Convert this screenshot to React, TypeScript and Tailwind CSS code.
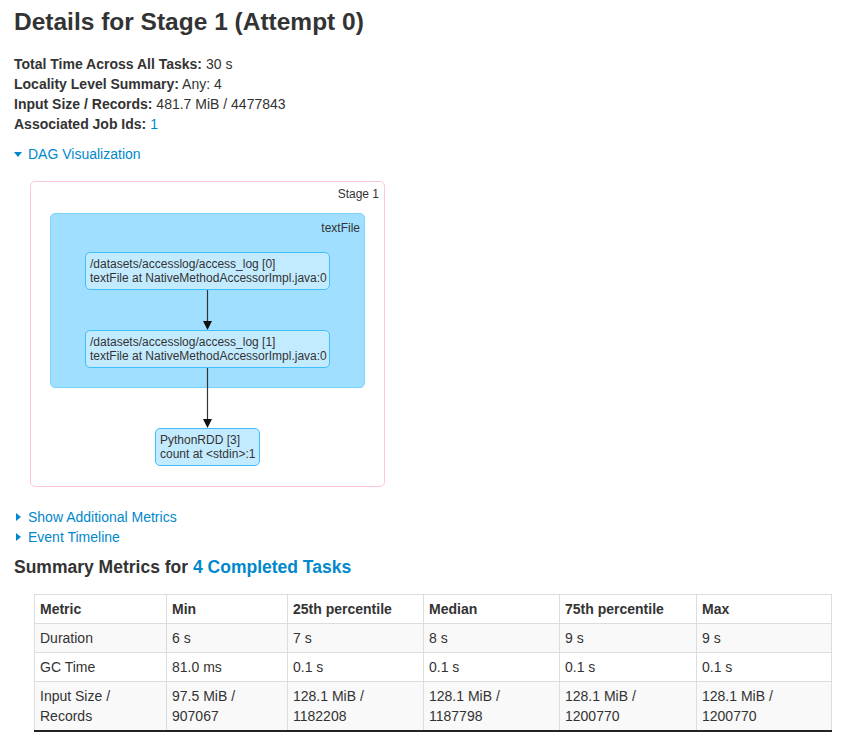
import React from "react";

const rows: { name: string; vals: string[][] }[] = [
  { name: "Duration", vals: [["6 s"], ["7 s"], ["8 s"], ["9 s"], ["9 s"]] },
  { name: "GC Time", vals: [["81.0 ms"], ["0.1 s"], ["0.1 s"], ["0.1 s"], ["0.1 s"]] },
  {
    name: "Input Size / Records",
    vals: [
      ["97.5 MiB /", "907067"],
      ["128.1 MiB /", "1182208"],
      ["128.1 MiB /", "1187798"],
      ["128.1 MiB /", "1200770"],
      ["128.1 MiB /", "1200770"],
    ],
  },
];

const widths = ["w-[132px]", "w-[121px]", "w-[136px]", "w-[136px]", "w-[137px]", "w-[135px]"];
const headers = ["Metric", "Min", "25th percentile", "Median", "75th percentile", "Max"];

function Node({ l1, l2, className }: { l1: string; l2: string; className: string }) {
  return (
    <div
      className={`absolute h-[38px] rounded-[5px] border border-[#3EC0FF] bg-[#C3EBFF] pl-[4px] pt-[4px] text-[12px] leading-[14px] text-[#333] whitespace-nowrap ${className}`}
    >
      <div>{l1}</div>
      <div>{l2}</div>
    </div>
  );
}

export default function App() {
  return (
    <div
      className="bg-white text-[14px] leading-[20px] text-[#333] pl-[14px] pb-[4px]"
      style={{ fontFamily: '"Liberation Sans", Arial, Helvetica, sans-serif' }}
    >
      <h3 className="text-[24.5px] font-bold leading-[40px] pt-[2px]">Details for Stage 1 (Attempt 0)</h3>
      <ul className="mt-[12px]">
        <li>
          <strong>Total Time Across All Tasks:</strong> 30 s
        </li>
        <li>
          <strong>Locality Level Summary:</strong> Any: 4
        </li>
        <li>
          <strong>Input Size / Records:</strong> 481.7 MiB / 4477843
        </li>
        <li>
          <strong>Associated Job Ids:</strong> <span className="text-[#0088cc]">1</span>
        </li>
      </ul>
      <div className="mt-[10px] flex items-center text-[#0088cc]">
        <span className="inline-block w-0 h-0 border-l-[4px] border-r-[4px] border-t-[5px] border-l-transparent border-r-transparent border-t-[#0088cc] mr-[6px]" />
        <span>DAG Visualization</span>
      </div>

      <div className="relative mt-[17px] ml-[16px] w-[355px] h-[306px] rounded-[5px] border border-[#FFC7D1]">
        <div className="absolute right-[5px] top-[5px] text-[12px] leading-[14px]">Stage 1</div>
        <div className="absolute left-[19px] top-[31px] w-[315px] h-[175px] rounded-[5px] border border-[#7DD3FF] bg-[#A0DFFF]">
          <div className="absolute right-[4px] top-[7px] text-[12px] leading-[14px]">textFile</div>
        </div>
        <Node
          className="left-[54px] top-[70px] w-[245px]"
          l1="/datasets/accesslog/access_log [0]"
          l2="textFile at NativeMethodAccessorImpl.java:0"
        />
        <Node
          className="left-[54px] top-[148px] w-[245px]"
          l1="/datasets/accesslog/access_log [1]"
          l2="textFile at NativeMethodAccessorImpl.java:0"
        />
        <Node className="left-[124px] top-[246px] w-[105px]" l1="PythonRDD [3]" l2="count at <stdin>:1" />
        <svg className="absolute left-0 top-0" width="355" height="306" viewBox="0 0 355 306">
          <line x1="176.5" y1="108" x2="176.5" y2="142" stroke="#333" strokeWidth="1.2" />
          <polygon points="172,139 181,139 176.5,148" fill="#111" />
          <line x1="176.5" y1="186" x2="176.5" y2="240" stroke="#333" strokeWidth="1.2" />
          <polygon points="172,237 181,237 176.5,246" fill="#111" />
        </svg>
      </div>

      <div className="mt-[20px] flex items-center text-[#0088cc]">
        <span className="inline-block w-0 h-0 border-t-[4px] border-b-[4px] border-l-[5px] border-t-transparent border-b-transparent border-l-[#0088cc] mr-[7px] ml-[2px]" />
        <span>Show Additional Metrics</span>
      </div>
      <div className="flex items-center text-[#0088cc]">
        <span className="inline-block w-0 h-0 border-t-[4px] border-b-[4px] border-l-[5px] border-t-transparent border-b-transparent border-l-[#0088cc] mr-[7px] ml-[2px]" />
        <span>Event Timeline</span>
      </div>
      <h4 className="mt-[10px] text-[17.5px] font-bold leading-[20px]">
        Summary Metrics for <span className="text-[#0088cc]">4 Completed Tasks</span>
      </h4>

      <table className="mt-[17px] ml-[20px] border-collapse w-[797px] table-fixed border-b-2 border-b-[#222]">
        <thead>
          <tr>
            {headers.map((h, i) => (
              <th
                key={h}
                className={`${widths[i]} border border-[#ddd] px-[5px] py-[4px] text-left font-bold leading-[20px]`}
              >
                {h}
              </th>
            ))}
          </tr>
        </thead>
        <tbody>
          {rows.map((r, ri) => (
            <tr key={r.name} className={ri % 2 === 0 ? "bg-[#f9f9f9]" : "bg-white"}>
              <td className="border border-[#ddd] px-[5px] py-[4px] align-top leading-[20px]">{r.name}</td>
              {r.vals.map((v, vi) => (
                <td key={vi} className="border border-[#ddd] px-[5px] py-[4px] align-top leading-[20px]">
                  {v.map((line, li) => (
                    <div key={li}>{line}</div>
                  ))}
                </td>
              ))}
            </tr>
          ))}
        </tbody>
      </table>
    </div>
  );
}
